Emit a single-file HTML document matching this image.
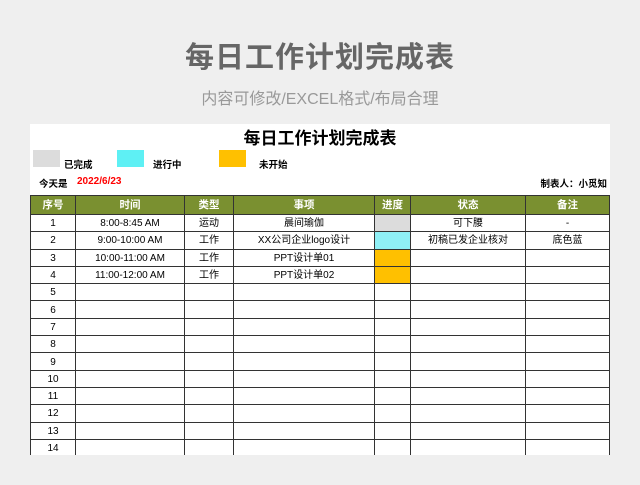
<html><head><style>
body{margin:0;width:640px;height:485px;background:#efefef;font-family:"Liberation Sans","Noto Sans CJK SC",sans-serif;overflow:hidden;position:relative}
.t{position:absolute;top:34px;width:640px;text-align:center;font-size:29px;color:#666;font-weight:bold;letter-spacing:1px}
.s{position:absolute;top:85px;width:640px;text-align:center;font-size:16px;color:#999}
.sheet{position:absolute;left:30px;top:124px;width:580px;height:331px;background:#fff;overflow:hidden}
.h{position:absolute;top:0px;width:580px;text-align:center;font-size:17px;font-weight:bold;color:#000}
.sw{position:absolute;top:26px;width:27px;height:17px}
.lb{position:absolute;top:33px;font-size:9.5px;font-weight:bold}
table{position:absolute;left:0;top:71px;border-collapse:collapse;font-size:10px;table-layout:fixed}
td{border:1px solid #333;padding:1px 0 0 0;text-align:center;line-height:15px;height:17.3px;box-sizing:border-box;vertical-align:middle;white-space:nowrap}
th{background:#7a9030;color:#fff;border:1px solid #333;height:19px;font-size:10.5px;padding:0;line-height:12px}
</style></head><body>
<div class="t">每日工作计划完成表</div>
<div class="s">内容可修改/EXCEL格式/布局合理</div>
<div class="sheet">
<div class="h">每日工作计划完成表</div>
<div class="sw" style="left:3px;background:#dcdcdc"></div><div class="lb" style="left:34px">已完成</div>
<div class="sw" style="left:87px;background:#5ef0f4"></div><div class="lb" style="left:123px">进行中</div>
<div class="sw" style="left:189px;background:#ffc000"></div><div class="lb" style="left:229px">未开始</div>
<div class="lb" style="left:9px;top:52px">今天是</div><div class="lb" style="left:47px;top:52px;color:#f00;font-size:10px">2022/6/23</div>
<div class="lb" style="right:3px;top:52px">制表人：小觅知</div>
<table>
<colgroup><col style="width:45px"><col style="width:109px"><col style="width:49px"><col style="width:141px"><col style="width:36px"><col style="width:115px"><col style="width:84px"></colgroup>
<tr><th>序号</th><th>时间</th><th>类型</th><th>事项</th><th>进度</th><th>状态</th><th>备注</th></tr>
<tr><td>1</td><td>8:00-8:45 AM</td><td>运动</td><td>晨间瑜伽</td><td style="background:#dcdcdc"></td><td>可下腰</td><td>-</td></tr>
<tr><td>2</td><td>9:00-10:00 AM</td><td>工作</td><td>XX公司企业logo设计</td><td style="background:#8ff0f6"></td><td>初稿已发企业核对</td><td>底色蓝</td></tr>
<tr><td>3</td><td>10:00-11:00 AM</td><td>工作</td><td>PPT设计单01</td><td style="background:#ffc000"></td><td></td><td></td></tr>
<tr><td>4</td><td>11:00-12:00 AM</td><td>工作</td><td>PPT设计单02</td><td style="background:#ffc000"></td><td></td><td></td></tr>
<tr><td>5</td><td></td><td></td><td></td><td></td><td></td><td></td></tr>
<tr><td>6</td><td></td><td></td><td></td><td></td><td></td><td></td></tr>
<tr><td>7</td><td></td><td></td><td></td><td></td><td></td><td></td></tr>
<tr><td>8</td><td></td><td></td><td></td><td></td><td></td><td></td></tr>
<tr><td>9</td><td></td><td></td><td></td><td></td><td></td><td></td></tr>
<tr><td>10</td><td></td><td></td><td></td><td></td><td></td><td></td></tr>
<tr><td>11</td><td></td><td></td><td></td><td></td><td></td><td></td></tr>
<tr><td>12</td><td></td><td></td><td></td><td></td><td></td><td></td></tr>
<tr><td>13</td><td></td><td></td><td></td><td></td><td></td><td></td></tr>
<tr><td>14</td><td></td><td></td><td></td><td></td><td></td><td></td></tr>
</table>
</div>
</body></html>
